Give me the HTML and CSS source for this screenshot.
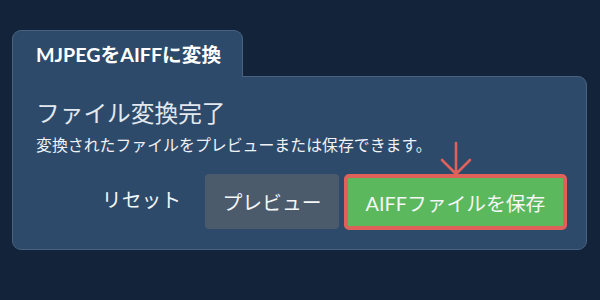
FILE: index.html
```html
<!DOCTYPE html>
<html lang="ja">
<head>
  <meta charset="UTF-8" />
  <title>MJPEGをAIFFに変換</title>
  <link rel="stylesheet" href="styles.css">
</head>
<body>
  <div class="converter">
    <div class="tab">MJPEGをAIFFに変換</div>
    <div class="panel">
      <h2>ファイル変換完了</h2>
      <p class="note">変換されたファイルをプレビューまたは保存できます。</p>
      <div class="actions">
        <button class="btn btn-reset">リセット</button>
        <button class="btn btn-preview">プレビュー</button>
        <button class="btn btn-save">
          <svg class="hint-arrow" width="32" height="36" viewBox="0 0 32 36">
            <path d="M16 2 V33 M2 19 L16 33 L30 19" fill="none" stroke="#e0605a" stroke-width="2.6" stroke-linecap="round" stroke-linejoin="round"/>
          </svg>
          AIFFファイルを保存
        </button>
      </div>
    </div>
  </div>
</body>
</html>
```

FILE: styles.css
```css
body {
  margin: 0;
  background: #12233a;
  font-family: 'Lato', 'Noto Sans CJK JP', sans-serif;
  color: #e8ecf1;
}
.converter {
  padding: 30px 0 0 12px;
  width: 575px;
}
.tab {
  position: relative;
  z-index: 1;
  box-sizing: border-box;
  width: 231px;
  height: 47px;
  margin-bottom: -1px;
  padding: 2px 0 0 23px;
  line-height: 44px;
  background: #2d4a6a;
  border: 1px solid #48627f;
  border-bottom: none;
  border-radius: 9px 9px 0 0;
  font-size: 19.7px;
  font-weight: 700;
  color: #fff;
  white-space: nowrap;
}
.panel {
  box-sizing: border-box;
  height: 174px;
  padding: 21px 19px 0 23px;
  background: #2d4a6a;
  border: 1px solid #48627f;
  border-radius: 0 9px 9px 9px;
}
.panel h2 {
  margin: 0;
  font-size: 23.7px;
  font-weight: 400;
  line-height: 30px;
  color: #e3e8ee;
}
.note {
  margin: 7px 0 0;
  font-size: 15.9px;
  line-height: 20px;
  color: #f0f2f5;
}
.actions {
  display: flex;
  justify-content: flex-end;
  gap: 5px;
  margin-top: 19px;
}
.btn {
  position: relative;
  box-sizing: border-box;
  height: 55px;
  padding: 0 22px;
  border: none;
  border-radius: 4px;
  font-family: inherit;
  font-size: 19.8px;
  color: #f4f6f8;
  background: transparent;
  white-space: nowrap;
}
.btn-reset {
  padding: 0 19px 6px 22px;
}
.btn-preview {
  width: 134px;
  padding: 0;
  background: #4b5b6c;
}
.btn-save {
  width: 223px;
  height: 56px;
  padding: 0;
  background: #5cb85c;
  border: 4px solid #e0605a;
  border-radius: 5px;
}
.hint-arrow {
  position: absolute;
  left: 50%;
  bottom: 100%;
  margin-left: -16px;
  margin-bottom: 1px;
}
```
